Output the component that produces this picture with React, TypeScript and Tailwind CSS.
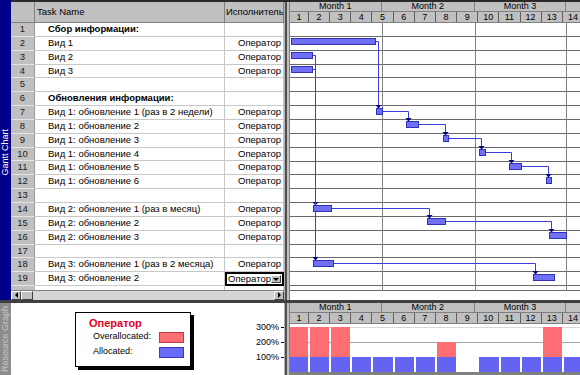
import React from "react";

type Row = { n: number; name?: string; res?: string; bold?: boolean; editing?: boolean };

const RES = "Оператор";

const rows: Row[] = [
  { n: 1, name: "Сбор информации:", bold: true },
  { n: 2, name: "Вид 1", res: RES },
  { n: 3, name: "Вид 2", res: RES },
  { n: 4, name: "Вид 3", res: RES },
  { n: 5 },
  { n: 6, name: "Обновления информации:", bold: true },
  { n: 7, name: "Вид 1: обновление 1 (раз в 2 недели)", res: RES },
  { n: 8, name: "Вид 1: обновление 2", res: RES },
  { n: 9, name: "Вид 1: обновление 3", res: RES },
  { n: 10, name: "Вид 1: обновление 4", res: RES },
  { n: 11, name: "Вид 1: обновление 5", res: RES },
  { n: 12, name: "Вид 1: обновление 6", res: RES },
  { n: 13 },
  { n: 14, name: "Вид 2: обновление 1 (раз в месяц)", res: RES },
  { n: 15, name: "Вид 2: обновление 2", res: RES },
  { n: 16, name: "Вид 2: обновление 3", res: RES },
  { n: 17 },
  { n: 18, name: "Вид 3: обновление 1 (раз в 2 месяца)", res: RES },
  { n: 19, name: "Вид 3: обновление 2", res: RES, editing: true },
];

// chart geometry, in page pixels
const ROW_H = 13.85;
const TOP = 23;
const X0 = 287.8;
const WK = 21.17;
const MONTH_LINES = [381.7, 475, 566];

const bars: Record<number, [number, number]> = {
  2: [291, 375],
  3: [291, 312],
  4: [291, 312],
  7: [376, 382],
  8: [406, 418],
  9: [443, 448],
  10: [479, 485],
  11: [509, 521],
  12: [546, 551],
  14: [313, 331],
  15: [427, 445],
  16: [549, 566],
  18: [313, 333],
  19: [533, 554],
};

const links: [number, number][] = [
  [2, 7], [3, 14], [4, 18], [7, 8], [8, 9], [9, 10], [10, 11], [11, 12],
  [14, 15], [15, 16], [18, 19],
];

const overload: Record<number, number> = { 1: 300, 2: 300, 3: 300, 8: 200, 13: 300 };
const idle = [9];

const barTop = (n: number) => Math.round(TOP + ROW_H * (n - 1) + 1.5);
const pctY = (p: number) => 372 - p * 0.15;

function Timescale() {
  const days = Array.from({ length: 14 }, (_, i) => i + 1);
  return (
    <div className="flex flex-col shrink-0 text-black">
      <div className="flex h-[10px] bg-[#c0c0c0] border-b border-[#808080] text-[9px] leading-[9px] overflow-hidden">
        <div className="w-[91.7px] shrink-0 border-r border-[#808080] text-center">Month 1</div>
        <div className="w-[93.3px] shrink-0 border-r border-[#808080] text-center">Month 2</div>
        <div className="w-[91px] shrink-0 border-r border-[#808080] text-center">Month 3</div>
        <div className="flex-1" />
      </div>
      <div className="flex h-[11px] bg-[#c0c0c0] border-b border-[#808080] text-[9px] leading-[10px] overflow-hidden">
        {days.map((d) => (
          <div
            key={d}
            className={`shrink-0 border-r border-[#606060] text-center ${d === 1 ? "w-[18.97px]" : "w-[21.17px]"}`}
          >
            {d}
          </div>
        ))}
      </div>
    </div>
  );
}

function Splitter() {
  return (
    <div className="w-[6px] shrink-0 flex">
      <div className="w-[1px] bg-[#b0b0b0]" />
      <div className="w-[2px] bg-[#505050]" />
      <div className="w-[2px] bg-[#c0c0c0]" />
      <div className="w-[1px] bg-[#808080]" />
    </div>
  );
}

function ScrollButton({ dir }: { dir: "left" | "right" }) {
  return (
    <div className="w-[10px] shrink-0 bg-[#c0c0c0] border-t border-l border-white border-b border-r border-b-[#404040] border-r-[#404040] flex items-center justify-center">
      {dir === "left" ? (
        <div className="w-0 h-0 border-y-[3px] border-y-transparent border-r-[3px] border-r-black" />
      ) : (
        <div className="w-0 h-0 border-y-[3px] border-y-transparent border-l-[3px] border-l-black" />
      )}
    </div>
  );
}

function TaskTable() {
  return (
    <div className="w-[273px] shrink-0 flex flex-col text-black">
      {/* Header */}
      <div className="flex h-[21px] shrink-0 bg-[#c0c0c0] border-b border-[#808080] text-[9.5px]">
        <div className="w-[24px] shrink-0 border-r border-[#808080]" />
        <div className="w-[190px] shrink-0 border-r border-[#808080] pl-[2px] flex items-center">Task Name</div>
        <div className="w-[59px] shrink-0 border-r border-[#808080] pl-[1px] flex items-center overflow-hidden whitespace-nowrap">
          Исполнитель
        </div>
      </div>

      {/* Rows */}
      {rows.map((r) => (
        <div key={r.n} className="flex h-[13.85px] shrink-0 text-[9.5px] leading-[12.85px]">
          <div className="w-[24px] shrink-0 bg-[#c0c0c0] border-b border-[#e4e4e4] border-r border-r-[#9a9a9a] text-center text-[#202020]">
            {r.n}
          </div>
          <div
            className={`w-[190px] shrink-0 border-b border-r border-[#c8c8c8] pl-[13px] whitespace-nowrap overflow-hidden ${
              r.bold ? "font-bold" : ""
            }`}
          >
            {r.name}
          </div>
          {r.editing ? (
            <div className="w-[59px] shrink-0 border-2 border-black flex items-center justify-between pl-[1px] pr-[1px] bg-white">
              <span className="leading-[10px]">{r.res}</span>
              <div className="w-[10px] h-[8px] bg-[#c0c0c0] border border-t-white border-l-white border-b-[#404040] border-r-[#404040] flex items-center justify-center">
                <div className="w-0 h-0 border-x-[3px] border-x-transparent border-t-[3px] border-t-black" />
              </div>
            </div>
          ) : (
            <div className="w-[59px] shrink-0 border-b border-r border-[#c8c8c8] pr-[2px] text-right whitespace-nowrap overflow-hidden">
              {r.res}
            </div>
          )}
        </div>
      ))}
      <div className="h-[3.85px] shrink-0 flex">
        <div className="w-[24px] bg-[#c0c0c0]" />
        <div className="w-[190px] border-r border-[#c8c8c8]" />
        <div className="w-[59px] border-r border-[#c8c8c8]" />
      </div>

      {/* Horizontal scrollbar */}
      <div className="h-[10px] shrink-0 flex border-t border-[#808080] bg-[#d6d6d6]">
        <ScrollButton dir="left" />
        <div className="w-[12px] shrink-0 bg-[#c0c0c0] border-t border-l border-white border-b border-r border-b-[#404040] border-r-[#404040]" />
        <div className="flex-1" />
        <ScrollButton dir="right" />
      </div>
    </div>
  );
}

function GanttBody() {
  const rowLines = Array.from({ length: 19 }, (_, k) => Math.round(TOP + ROW_H * (k + 1)) - 0.5);
  return (
    <svg width={290} height={277} viewBox="290 23 290 277" className="block shrink-0">
      <rect x={290} y={23} width={290} height={277} fill="#ffffff" />
      {rowLines.map((y, i) => (
        <line key={i} x1={290} x2={580} y1={y} y2={y} stroke="#6a6a6a" />
      ))}
      <line x1={290} x2={580} y1={290.5} y2={290.5} stroke="#6a6a6a" />
      {MONTH_LINES.map((x) => (
        <line key={x} x1={Math.round(x) + 0.5} x2={Math.round(x) + 0.5} y1={23} y2={291} stroke="#808080" />
      ))}

      {/* dependency links */}
      {links.map(([a, b]) => {
        const ax2 = bars[a][1];
        const bx1 = bars[b][0];
        const ay = barTop(a) + 3.5;
        const vx = bx1 + 2.5;
        const by = barTop(b);
        return (
          <g key={`${a}-${b}`}>
            <path d={`M${ax2} ${ay} H${vx} V${by - 2}`} fill="none" stroke="#3c3cd8" strokeWidth={1} />
            <polygon points={`${vx - 3},${by - 3} ${vx + 3},${by - 3} ${vx},${by + 0.5}`} fill="#000080" />
          </g>
        );
      })}

      {/* task bars */}
      {Object.entries(bars).map(([n, [x1, x2]]) => (
        <rect
          key={n}
          x={x1 + 0.5}
          y={barTop(Number(n)) + 0.5}
          width={x2 - x1}
          height={6}
          fill="#7070f4"
          stroke="#3030b8"
        />
      ))}
    </svg>
  );
}

function ResourceHistogram() {
  const weeks = Array.from({ length: 14 }, (_, i) => i + 1);
  return (
    <svg width={290} height={51} viewBox="290 324 290 51" className="block shrink-0">
      <rect x={290} y={324} width={290} height={51} fill="#ffffff" />
      <line x1={290} x2={580} y1={327.5} y2={327.5} stroke="#d8d8d8" />
      <line x1={290} x2={580} y1={342.5} y2={342.5} stroke="#a8a8a8" />
      {weeks.map((k) => {
        const left = Math.round(X0 + WK * (k - 1));
        const right = Math.round(X0 + WK * k);
        const x = left + 1;
        const w = right - left - 2;
        const over = overload[k];
        return (
          <g key={k}>
            {over && <rect x={x} y={pctY(over)} width={w} height={pctY(100) - pctY(over)} fill="#ff6e72" />}
            {!idle.includes(k) && <rect x={x} y={pctY(100)} width={w} height={372 - pctY(100)} fill="#6464f2" />}
          </g>
        );
      })}
      <rect x={290} y={372} width={290} height={3} fill="#808080" />
    </svg>
  );
}

function Legend() {
  return (
    <div className="ml-[64px] mt-[9px] w-[116px] h-[55px] shrink-0 border border-black bg-white shadow-[3px_3px_0_#000] pt-[4px]">
      <div className="h-[13px] leading-[13px] pl-[13px] text-[11px] font-bold text-[#e0001c]">Оператор</div>
      <div className="mt-[1px] h-[12px] flex items-center text-[9px] text-black">
        <span className="w-[83px] pl-[17px]">Overallocated:</span>
        <div className="w-[25px] h-[11px] bg-[#ff7074] border border-[#c03a40]" />
      </div>
      <div className="mt-[3px] h-[12px] flex items-center text-[9px] text-black">
        <span className="w-[83px] pl-[17px]">Allocated:</span>
        <div className="w-[25px] h-[11px] bg-[#6a6af8] border border-[#3a3ac0]" />
      </div>
    </div>
  );
}

export default function App() {
  return (
    <div className="w-[580px] h-[375px] overflow-hidden flex flex-col bg-white font-['Liberation_Sans',Arial,sans-serif]">
      {/* Gantt view */}
      <div className="h-[300px] shrink-0 flex">
        <div className="w-[11px] shrink-0 bg-[#000088] flex items-center justify-center pt-[4px]">
          <span className="[writing-mode:vertical-rl] rotate-180 text-white text-[9px] whitespace-nowrap">Gantt Chart</span>
        </div>
        <div className="flex-1 flex flex-col border-t-2 border-[#2a2a2a]">
          <div className="flex h-[298px]">
            <TaskTable />
            <Splitter />
            <div className="w-[290px] shrink-0 flex flex-col">
              <Timescale />
              <GanttBody />
            </div>
          </div>
        </div>
      </div>

      <div className="h-[3px] shrink-0 bg-[#404040]" />

      {/* Resource graph view */}
      <div className="h-[72px] shrink-0 flex">
        <div className="w-[11px] shrink-0 bg-[#8c8c8c] flex items-center justify-center">
          <span className="[writing-mode:vertical-rl] rotate-180 text-[#c8c8c8] text-[9px] whitespace-nowrap">Resource Graph</span>
        </div>
        <div className="w-[273px] shrink-0 flex bg-white">
          <Legend />
          <div className="flex-1 flex flex-col items-end pt-[17px] text-[9px] text-black">
            {["300%", "200%", "100%"].map((p) => (
              <div key={p} className="h-[15px] leading-[15px] flex items-center">
                <span>{p}</span>
                <span className="ml-[2px] w-[3px] h-px bg-black" />
              </div>
            ))}
          </div>
        </div>
        <Splitter />
        <div className="w-[290px] shrink-0 flex flex-col">
          <Timescale />
          <ResourceHistogram />
        </div>
      </div>
    </div>
  );
}
